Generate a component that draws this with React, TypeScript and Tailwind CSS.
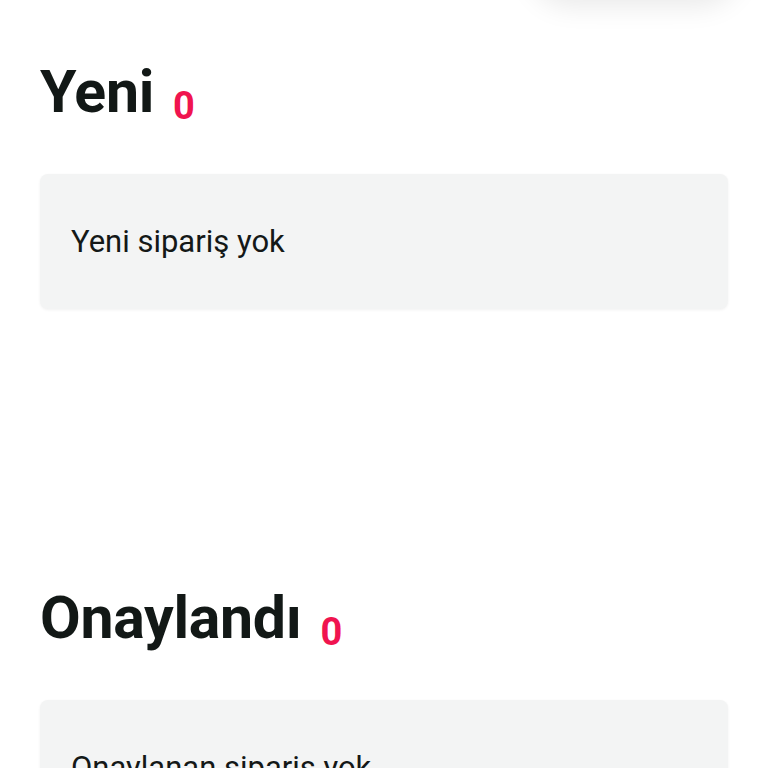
import React from "react";

const sections = [
  { title: "Yeni", count: 0, empty: "Yeni sipariş yok" },
  { title: "Onaylandı", count: 0, empty: "Onaylanan sipariş yok" },
];

export default function App() {
  return (
    <div
      className="relative min-h-screen overflow-hidden bg-white"
      style={{ fontFamily: "Roboto, 'Noto Sans', sans-serif" }}
    >
      {/* floating sheet peeking from the top */}
      <div className="absolute -top-[62px] left-[530px] h-[60px] w-[210px] rounded-b-[40px] bg-white shadow-[0_8px_28px_rgba(0,0,0,0.09)]" />

      <div className="flex flex-col gap-[279px] px-10 pt-[62px]">
        {sections.map((s) => (
          <section key={s.title}>
            <div className="mb-[53px] flex items-baseline gap-[19px]">
              <h2 className="text-[59px] font-bold leading-none tracking-[-0.3px] text-[#121816]">
                {s.title}
              </h2>
              <span className="translate-y-[7px] text-[38px] font-bold leading-none text-[#f0144f]">
                {s.count}
              </span>
            </div>
            <div className="flex h-[135px] items-center rounded-lg bg-[#f3f4f4] px-[31px] shadow-[0_1px_3px_rgba(0,0,0,0.06)]">
              <p className="text-[31px] leading-none text-[#141817]">{s.empty}</p>
            </div>
          </section>
        ))}
      </div>
    </div>
  );
}
